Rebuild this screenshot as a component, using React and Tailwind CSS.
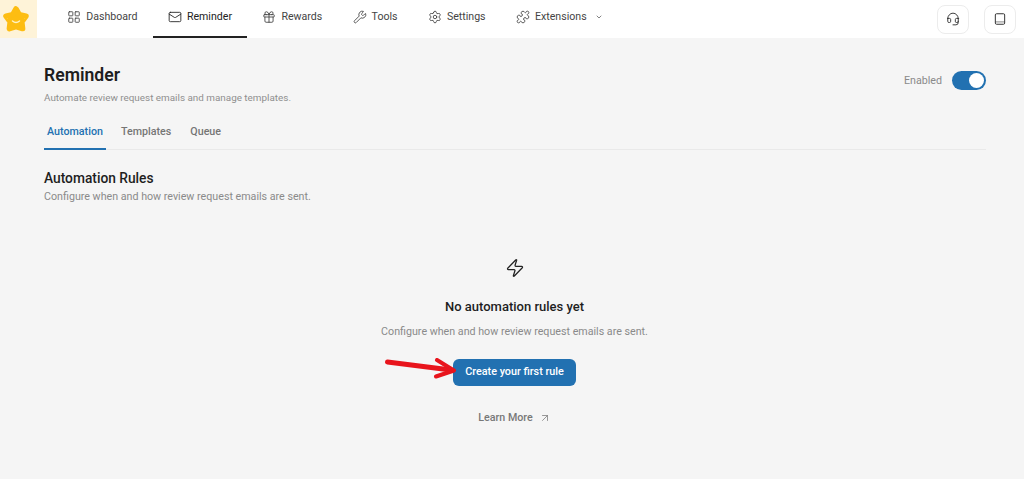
import React from 'react';
import {
  LayoutGrid,
  Mail,
  Gift,
  Wrench,
  Settings,
  Puzzle,
  ChevronDown,
  Headset,
  Zap,
  ArrowUpRight,
} from 'lucide-react';

const navItems = [
  { label: 'Dashboard', icon: LayoutGrid },
  { label: 'Reminder', icon: Mail, active: true },
  { label: 'Rewards', icon: Gift },
  { label: 'Tools', icon: Wrench },
  { label: 'Settings', icon: Settings },
  { label: 'Extensions', icon: Puzzle, caret: true },
];

const Logo = () => (
  <div className="w-[37px] h-[38px] bg-[#fef3d8] flex items-center justify-start shrink-0">
    <svg width="30" height="30" viewBox="0 0 30 30" className="ml-[1px]">
      <path
        d="M15 5 L18.4 10.8 L25 12.2 L20.8 17.8 L21.6 24.6 L15 22.6 L8.4 24.6 L9.2 17.8 L5 12.2 L11.6 10.8 Z"
        fill="#fdbd12"
        stroke="#fdbd12"
        strokeWidth="5.5"
        strokeLinejoin="round"
      />
      <path d="M11.5 17 Q15 20 18.5 17" fill="none" stroke="#fff3c4" strokeWidth="1.5" strokeLinecap="round" />
    </svg>
  </div>
);

const DocsIcon = () => (
  <svg width="14" height="14" viewBox="0 0 24 24" fill="none" stroke="currentColor" strokeWidth="1.7" strokeLinejoin="round">
    <rect x="4" y="3" width="16" height="18" rx="2" />
    <path d="M4 17 H20" strokeOpacity="0.6" />
  </svg>
);

const Header = () => (
  <header className="h-[38px] bg-white flex items-stretch">
    <Logo />
    <nav className="flex ml-[15.3px]">
      {navItems.map(({ label, icon: Icon, active, caret }) => (
        <a
          key={label}
          className={`flex items-center gap-[5px] pl-[15px] pr-[15.4px] pb-[2px] text-[10.6px] border-b-2 ${
            active ? 'border-[#222222] text-[#222222]' : 'border-transparent text-[#444444]'
          }`}
        >
          <Icon size={14} strokeWidth={1.5} />
          <span>{label}</span>
          {caret && <ChevronDown size={8} strokeWidth={2} className="ml-[3px]" />}
        </a>
      ))}
    </nav>
    <div className="ml-auto flex items-center gap-[15px] pr-[8px]">
      <button className="w-[32px] h-[29px] bg-white border border-[#ececec] rounded-lg flex items-center justify-center text-[#333333]">
        <Headset size={14} strokeWidth={1.6} />
      </button>
      <button className="w-[32px] h-[29px] bg-white border border-[#ececec] rounded-lg flex items-center justify-center text-[#333333]">
        <DocsIcon />
      </button>
    </div>
  </header>
);

const Tabs = () => (
  <div className="flex border-b border-[#e9e9e9] mt-[12px] h-[33px]">
    <div className="w-[62px] -mb-px border-b-2 border-[#2271b1] text-[#2271b1] text-[10.7px] font-medium flex items-center justify-center pb-[1px]">
      Automation
    </div>
    <div className="ml-[15px] text-[#757575] text-[10.7px] font-medium flex items-center pb-[2px]">Templates</div>
    <div className="ml-[19px] text-[#757575] text-[10.7px] font-medium flex items-center pb-[2px]">Queue</div>
  </div>
);

const EmptyState = () => (
  <div className="flex flex-col items-center mt-[53px] pr-px">
    <Zap size={20} strokeWidth={1.5} className="text-[#222222]" />
    <h3 className="mt-[19px] text-[13px] leading-[20px] font-medium text-[#1e1e1e]">No automation rules yet</h3>
    <p className="mt-[7px] text-[10.7px] leading-[16px] text-[#8a8a8a]">Configure when and how review request emails are sent.</p>
    <div className="relative mt-[18px]">
      <button className="w-[123px] h-[27px] bg-[#2271b1] rounded-md text-white text-[10.8px] font-medium">
        Create your first rule
      </button>
      <svg className="absolute left-[-68px] top-0" width="72" height="24" viewBox="0 0 72 24">
        <path d="M2.5 4 L66 12" stroke="#e8141c" strokeWidth="5" strokeLinecap="round" fill="none" />
        <path d="M52 2 L69 12.5 L51 18.5" stroke="#e8141c" strokeWidth="4" strokeLinecap="round" strokeLinejoin="round" fill="none" />
      </svg>
    </div>
    <a className="mt-[24px] flex items-center gap-[6px] text-[10.7px] font-medium text-[#787878]">
      Learn More
      <ArrowUpRight size={12} strokeWidth={1.5} />
    </a>
  </div>
);

export default function App() {
  return (
    <div className="min-h-[479px] bg-[#f5f5f5] font-['Roboto',sans-serif]">
      <Header />
      <main className="pl-[44px] pr-[38px] pt-[26px]">
        <div className="flex justify-between">
          <div>
            <h1 className="text-[17.6px] leading-[22px] font-semibold text-[#1e1e1e]">Reminder</h1>
            <p className="mt-[5px] text-[9.9px] leading-[14px] text-[#8f8f8f]">Automate review request emails and manage templates.</p>
          </div>
          <div className="flex items-center gap-[10px] h-[20px] mt-[6px]">
            <span className="text-[10.7px] text-[#8a8a8a] pt-[2px]">Enabled</span>
            <div className="w-[34px] h-[19px] rounded-full bg-[#2271b1] flex items-center justify-end pr-[2px]">
              <div className="w-[15px] h-[15px] rounded-full bg-white" />
            </div>
          </div>
        </div>
        <Tabs />
        <section className="mt-[19px]">
          <h2 className="text-[13.75px] leading-[18px] font-medium text-[#1e1e1e]">Automation Rules</h2>
          <p className="mt-[2px] text-[10.7px] leading-[16px] text-[#8a8a8a]">Configure when and how review request emails are sent.</p>
        </section>
        <EmptyState />
      </main>
    </div>
  );
}
